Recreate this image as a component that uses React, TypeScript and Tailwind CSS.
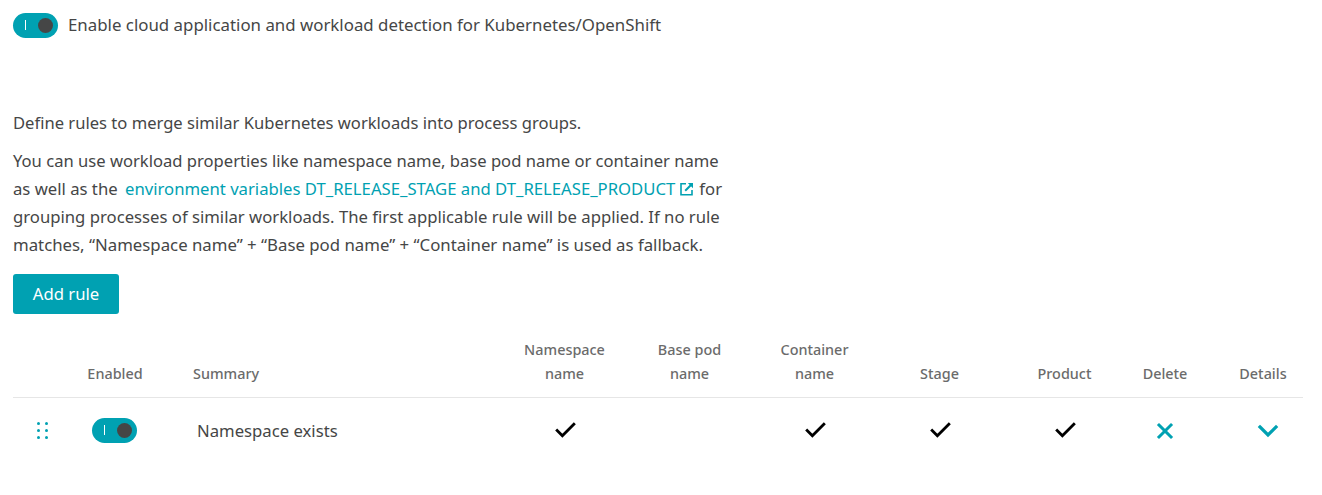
import { Check, ChevronDown, X } from "lucide-react";

const columns = "grid w-[1290px] grid-cols-[57px_88px_344px_125px_125px_125px_125px_125px_76px_100px]";

const Toggle = () => {
  return (
    <div className="flex h-[25px] w-[45px] shrink-0 items-center justify-between rounded-full bg-[#00a1b2] pl-3 pr-[5px]">
      <span className="h-[10px] w-px bg-white" />
      <span className="size-[15px] rounded-full bg-[#454646]" />
    </div>
  );
};

const DragHandle = () => {
  return (
    <div className="grid grid-cols-2 gap-x-[5px] gap-y-[4px]">
      {[0, 1, 2, 3, 4, 5].map((dot) => (
        <span key={dot} className="size-[3px] rounded-full bg-[#00a1b2]" />
      ))}
    </div>
  );
};

const ExternalIcon = () => {
  return (
    <svg viewBox="0 0 14 14" className="mx-[5px] inline-block size-[14px] align-[-1px]" fill="none" stroke="#00a1b2" strokeWidth="1.6">
      <path d="M6 1.8H1v11h11V8" />
      <path d="M5.2 8.8 12 2" strokeWidth="2" />
      <path d="M7.8 1h5.2v5.2z" fill="#00a1b2" stroke="none" />
    </svg>
  );
};

const Tick = () => <Check className="size-[25px] text-black" strokeWidth={2.7} strokeLinecap="square" strokeLinejoin="miter" />;

const headerClass = "flex items-end justify-center text-center text-[14.4px] font-medium leading-6 text-[#6b6b6b]";

const App = () => {
  return (
    <div className="h-[495px] w-[1322px] overflow-hidden bg-white px-[13px] pt-[11px] text-[16.7px] text-[#454646] [font-family:'Noto_Sans',sans-serif]">
      <div className="flex items-center gap-[10px]">
        <Toggle />
        <span className="text-[16.85px] leading-7">Enable cloud application and workload detection for Kubernetes/OpenShift</span>
      </div>

      <p className="mt-[70px] text-[16.58px] leading-7">Define rules to merge similar Kubernetes workloads into process groups.</p>
      <p className="mt-[10px] w-[730px] leading-7">
        <span className="text-[16.6px]">You can use workload properties like namespace name, base pod name or container name</span>
        <br />
        <span className="mr-[3px]">as well as the</span>{" "}
        <a className="text-[#00a1b2]">environment variables DT_RELEASE_STAGE and DT_RELEASE_PRODUCT</a>
        <ExternalIcon />
        for
        <br />
        grouping processes of similar workloads. The first applicable rule will be applied. If no rule
        <br />
        <span className="text-[16.8px]">matches, “Namespace name” + “Base pod name” + “Container name” is used as fallback.</span>
      </p>

      <button className="mt-[15px] flex h-10 w-[106px] items-center justify-center rounded-[3px] bg-[#00a1b2] text-[16.7px] text-white">
        Add rule
      </button>

      <div className={`${columns} mt-6 border-b border-[#e6e6e6] pb-[11px]`}>
        <div />
        <div className={`${headerClass} pl-[2px]`}>Enabled</div>
        <div className="flex items-end pl-[35px] text-[14.4px] font-medium leading-6 text-[#6b6b6b]">Summary</div>
        <div className={headerClass}>Namespace<br />name</div>
        <div className={headerClass}>Base pod<br />name</div>
        <div className={headerClass}>Container<br />name</div>
        <div className={headerClass}>Stage</div>
        <div className={headerClass}>Product</div>
        <div className={headerClass}>Delete</div>
        <div className={`${headerClass} pl-5`}>Details</div>
      </div>

      <div className={`${columns} h-[64px] items-center`}>
        <div className="flex justify-center pl-px">
          <DragHandle />
        </div>
        <div className="flex justify-center">
          <Toggle />
        </div>
        <div className="pl-[39px] pt-[2px]">Namespace exists</div>
        <div className="flex justify-center pt-px pl-px">
          <Tick />
        </div>
        <div />
        <div className="flex justify-center pt-px pl-px">
          <Tick />
        </div>
        <div className="flex justify-center pt-px pl-px">
          <Tick />
        </div>
        <div className="flex justify-center pt-px pl-px">
          <Tick />
        </div>
        <div className="flex justify-center pt-px">
          <X className="size-[24px] text-[#00a1b2]" strokeWidth={3} strokeLinecap="square" />
        </div>
        <div className="flex justify-center pl-[30px] pt-px">
          <ChevronDown className="size-[32px] text-[#00a1b2]" strokeWidth={2.4} strokeLinecap="square" strokeLinejoin="miter" />
        </div>
      </div>
    </div>
  );
};

export default App;
